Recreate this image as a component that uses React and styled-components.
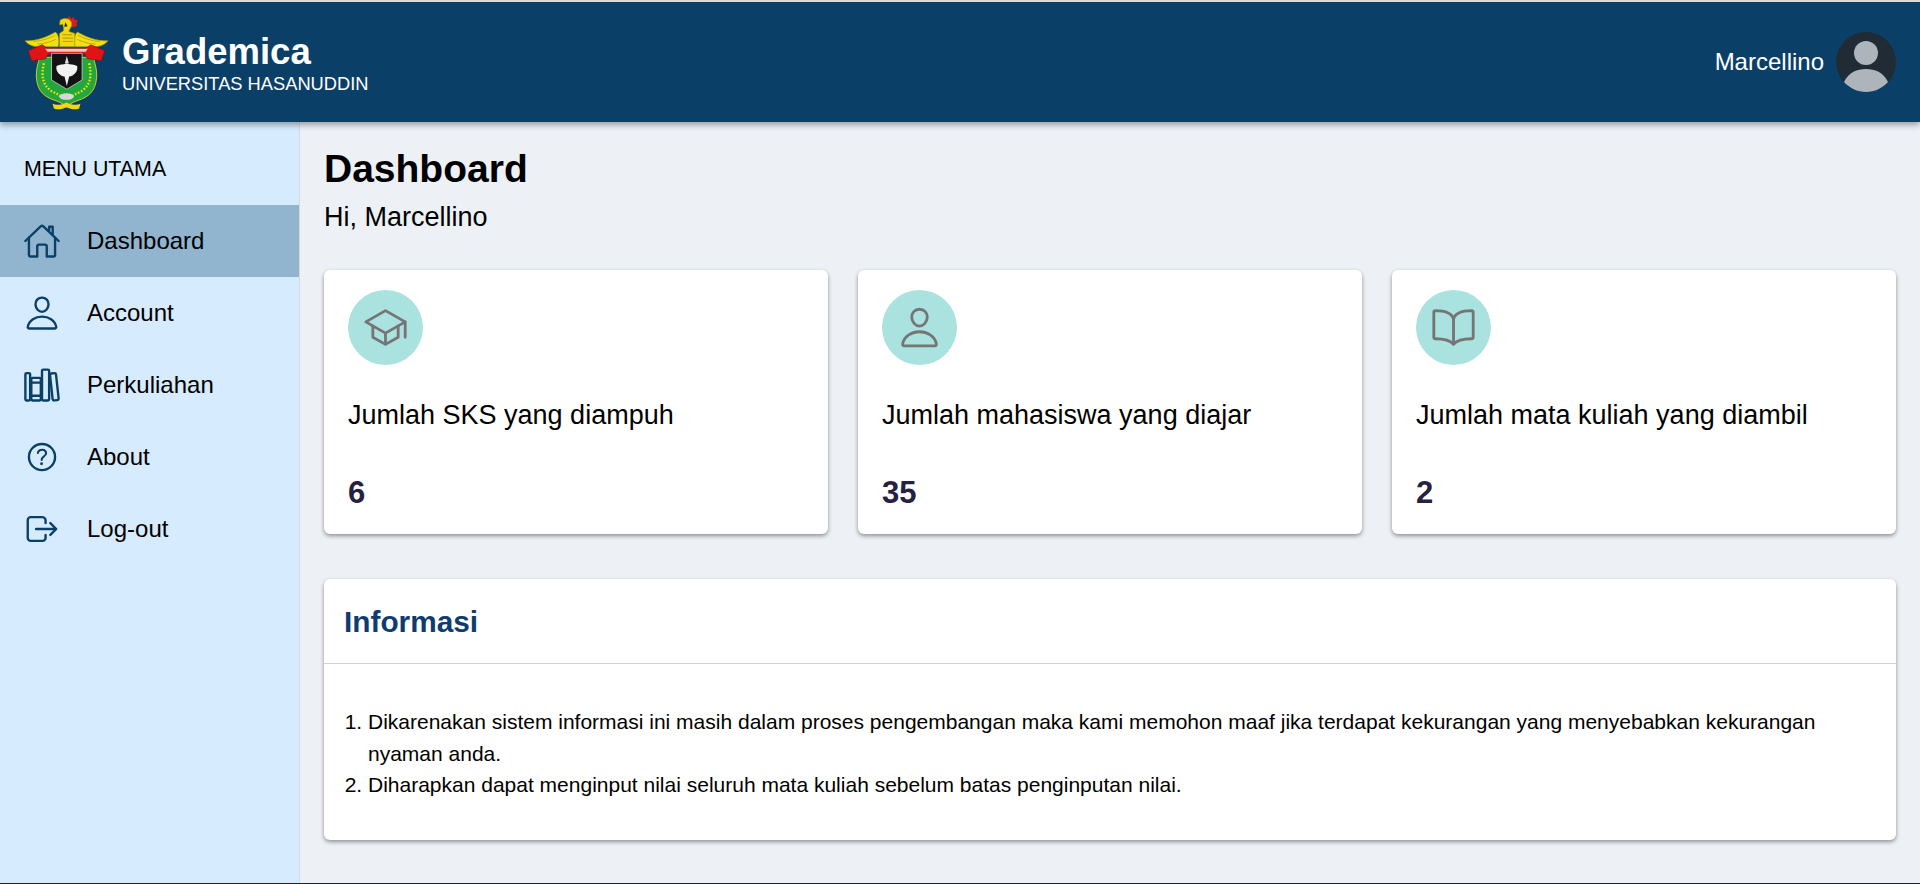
import styled, { createGlobalStyle } from "styled-components";
import {
    IoHomeOutline,
    IoPersonOutline,
    IoLibraryOutline,
    IoHelpCircleOutline,
    IoLogOutOutline,
    IoSchoolOutline,
    IoBookOutline,
} from "react-icons/io5";

const GlobalStyle = createGlobalStyle`
    * {
        box-sizing: border-box;
    }
    body {
        margin: 0;
        font-family: "Liberation Sans", Arial, sans-serif;
        color: #000;
    }
`;

const Page = styled.div`
    height: 884px;
    display: flex;
    flex-direction: column;
    overflow: hidden;
    background: #edf0f5;
    border-top: 2px solid #d9dadb;
    border-bottom: 1px solid #20242a;
`;

const Header = styled.header`
    position: relative;
    z-index: 2;
    flex: 0 0 120px;
    display: flex;
    align-items: center;
    justify-content: space-between;
    padding: 0 24px 0 25px;
    background: #0a4068;
    color: #fff;
    box-shadow: 0 3px 6px rgba(0, 0, 0, 0.35);
`;

const Brand = styled.div`
    display: flex;
    align-items: center;
    gap: 14px;
`;

const BrandText = styled.div`
    display: flex;
    flex-direction: column;
`;

const BrandName = styled.div`
    font-size: 36.5px;
    line-height: 42px;
    font-weight: 700;
    margin-top: 1px;
`;

const BrandSub = styled.div`
    font-size: 18.3px;
    line-height: 22px;
`;

const UserBox = styled.div`
    display: flex;
    align-items: center;
    gap: 12px;
    font-size: 24px;
`;

const Body = styled.div`
    flex: 1;
    display: flex;
    min-height: 0;
`;

const Sidebar = styled.aside`
    flex: 0 0 300px;
    background: #d6ebfd;
    border-right: 1px solid #d5d9de;
    padding-top: 35px;
`;

const MenuTitle = styled.div`
    font-size: 21.4px;
    line-height: 24px;
    padding-left: 24px;
    margin-bottom: 24px;
`;

const MenuItem = styled.div`
    height: 72px;
    display: flex;
    align-items: center;
    padding-left: 23px;
    gap: 26px;
    font-size: 24px;
    background: ${props => (props.$active ? "#91b4cf" : "transparent")};
    color: #000;

    svg {
        flex: 0 0 38px;
        color: #0a4068;
    }
`;

const Main = styled.main`
    flex: 1;
    padding: 25px 24px 0 24px;
`;

const PageTitle = styled.h1`
    margin: 0;
    font-size: 39px;
    line-height: 44px;
    font-weight: 700;
`;

const Greeting = styled.p`
    margin: 10px 0 0;
    font-size: 27px;
    line-height: 32px;
`;

const CardRow = styled.div`
    display: grid;
    grid-template-columns: repeat(3, 1fr);
    gap: 30px;
    margin-top: 37px;
`;

const Card = styled.div`
    height: 264px;
    padding: 20px 24px;
    background: #fff;
    border-radius: 6px;
    box-shadow: 0 2px 4px rgba(0, 0, 0, 0.4);
`;

const IconCircle = styled.div`
    width: 75px;
    height: 75px;
    border-radius: 50%;
    display: flex;
    align-items: center;
    justify-content: center;
    background: #aae2df;
    color: #757575;
`;

const CardLabel = styled.div`
    margin-top: 34px;
    font-size: 27px;
    line-height: 32px;
`;

const CardValue = styled.div`
    margin-top: 46px;
    font-size: 31px;
    line-height: 32px;
    font-weight: 700;
    color: #25213f;
`;

const InfoCard = styled.section`
    margin-top: 45px;
    height: 261px;
    background: #fff;
    border-radius: 6px;
    box-shadow: 0 2px 4px rgba(0, 0, 0, 0.4);
`;

const InfoHeader = styled.h2`
    margin: 0;
    height: 85px;
    padding: 2px 20px 0;
    display: flex;
    align-items: center;
    font-size: 29.8px;
    font-weight: 700;
    color: #0f3c70;
    border-bottom: 1px solid #cfd1d4;
`;

const InfoList = styled.ol`
    margin: 42px 0 0;
    padding: 0 44px;
    font-size: 21px;
    line-height: 31.5px;
`;

// drawn on the crest's own 250 wide grid
function Logo() {
    return (
        <svg width="83" height="95" viewBox="75 45 250 285">
            {/* wings */}
            <path d="M75 122c32 2 64-10 92-26 10 8 12 28 8 44h-42c-24 2-46-2-58-18z" fill="#f2e010" stroke="#a39212" strokeWidth="2" />
            <path d="M325 122c-32 2-64-10-92-26-10 8-12 28-8 44h42c24 2 46-2 58-18z" fill="#f2e010" stroke="#a39212" strokeWidth="2" />
            <path d="M100 124c20 0 44-8 66-18M112 132c18 0 38-6 56-14M300 124c-20 0-44-8-66-18M288 132c-18 0-38-6-56-14" fill="none" stroke="#a39212" strokeWidth="2" />
            {/* rooster */}
            <path d="M195 52l7 5 6-10 6 9 8-6 2 9 10 1-4 10 3 6-12 6-14-10z" fill="#d91c1c" />
            <path d="M181 60c12-8 30-6 34 8 3 12-6 18-8 26l18 6v40h-46v-40l12-8c2-8-2-14-2-20l-10 2z" fill="#f2d90d" stroke="#a39212" strokeWidth="2" />
            <path d="M188 104h30M188 114h32M188 124h32" stroke="#8a7a10" strokeWidth="2" />
            <path d="M197 66l6 12-10 2z" fill="#222" />
            {/* shield with wreath */}
            <path d="M118 172h164c2 18 10 34 9 56-2 36-14 56-46 70-18 6-35 12-45 24-10-12-27-18-45-24-32-14-44-34-46-70-1-22 7-38 9-56z" fill="#22a83c" stroke="#d8c820" strokeWidth="3" />
            <path d="M132 190c-8 34-6 62 20 82 12 8 24 10 34 20M268 190c8 34 6 62-20 82-12 8-24 10-34 20" fill="none" stroke="#f2e010" strokeWidth="7" strokeDasharray="5 5" />
            <path d="M158 312c12 6 30 2 42-4 12 6 30 10 42 4l-4 14c-14 6-28 0-38-4-10 4-24 10-38 4z" fill="#f2d90d" />
            <ellipse cx="200" cy="290" rx="22" ry="10" fill="#d8d8d8" />
            {/* ribbon */}
            <path d="M85 152l42-18 16 12h114l16-12 42 18-10 30-42-6-8-14H145l-8 14-42 6z" fill="#e01414" stroke="#8f0f0f" strokeWidth="2" />
            <path d="M136 146h128l-6 9H142z" fill="#f4c6c6" />
            {/* black inner shield */}
            <path d="M155 160h92v80l-46 28-46-28z" fill="#131313" stroke="#e8e8e8" strokeWidth="2" />
            <path d="M170 198c10-6 20-2 31-8 11 6 21 2 31 8 4 16-10 30-24 32l-7 28-7-28c-14-2-28-16-24-32z" fill="#f2f2f2" />
            <path d="M201 168l6 22h-12z" fill="#ddd" />
        </svg>
    );
}

function Avatar() {
    return (
        <svg width="60" height="60" viewBox="0 0 60 60">
            <circle cx="30" cy="30" r="30" fill="#212b36" />
            <circle cx="30" cy="21" r="12" fill="#aeb4bb" />
            <path d="M8 50c5-10 13-13 22-13s17 3 22 13c-5.500 6-13 10-22 10S13.500 56 8 50z" fill="#aeb4bb" />
        </svg>
    );
}

const menu = [
    { label: "Dashboard", Icon: IoHomeOutline, active: true },
    { label: "Account", Icon: IoPersonOutline },
    { label: "Perkuliahan", Icon: IoLibraryOutline },
    { label: "About", Icon: IoHelpCircleOutline },
    { label: "Log-out", Icon: IoLogOutOutline },
];

const stats = [
    { label: "Jumlah SKS yang diampuh", value: 6, Icon: IoSchoolOutline },
    { label: "Jumlah mahasiswa yang diajar", value: 35, Icon: IoPersonOutline },
    { label: "Jumlah mata kuliah yang diambil", value: 2, Icon: IoBookOutline },
];

export default function App() {
    return (
        <>
            <GlobalStyle />
            <Page>
                <Header>
                    <Brand>
                        <Logo />
                        <BrandText>
                            <BrandName>Grademica</BrandName>
                            <BrandSub>UNIVERSITAS HASANUDDIN</BrandSub>
                        </BrandText>
                    </Brand>
                    <UserBox>
                        Marcellino
                        <Avatar />
                    </UserBox>
                </Header>
                <Body>
                    <Sidebar>
                        <MenuTitle>MENU UTAMA</MenuTitle>
                        {menu.map(({ label, Icon, active }) => (
                            <MenuItem key={label} $active={active}>
                                <Icon size={38} />
                                {label}
                            </MenuItem>
                        ))}
                    </Sidebar>
                    <Main>
                        <PageTitle>Dashboard</PageTitle>
                        <Greeting>Hi, Marcellino</Greeting>
                        <CardRow>
                            {stats.map(({ label, value, Icon }) => (
                                <Card key={label}>
                                    <IconCircle>
                                        <Icon size={45} />
                                    </IconCircle>
                                    <CardLabel>{label}</CardLabel>
                                    <CardValue>{value}</CardValue>
                                </Card>
                            ))}
                        </CardRow>
                        <InfoCard>
                            <InfoHeader>Informasi</InfoHeader>
                            <InfoList>
                                <li>Dikarenakan sistem informasi ini masih dalam proses pengembangan maka kami memohon maaf jika terdapat kekurangan yang menyebabkan kekurangan nyaman anda.</li>
                                <li>Diharapkan dapat menginput nilai seluruh mata kuliah sebelum batas penginputan nilai.</li>
                            </InfoList>
                        </InfoCard>
                    </Main>
                </Body>
            </Page>
        </>
    );
}
